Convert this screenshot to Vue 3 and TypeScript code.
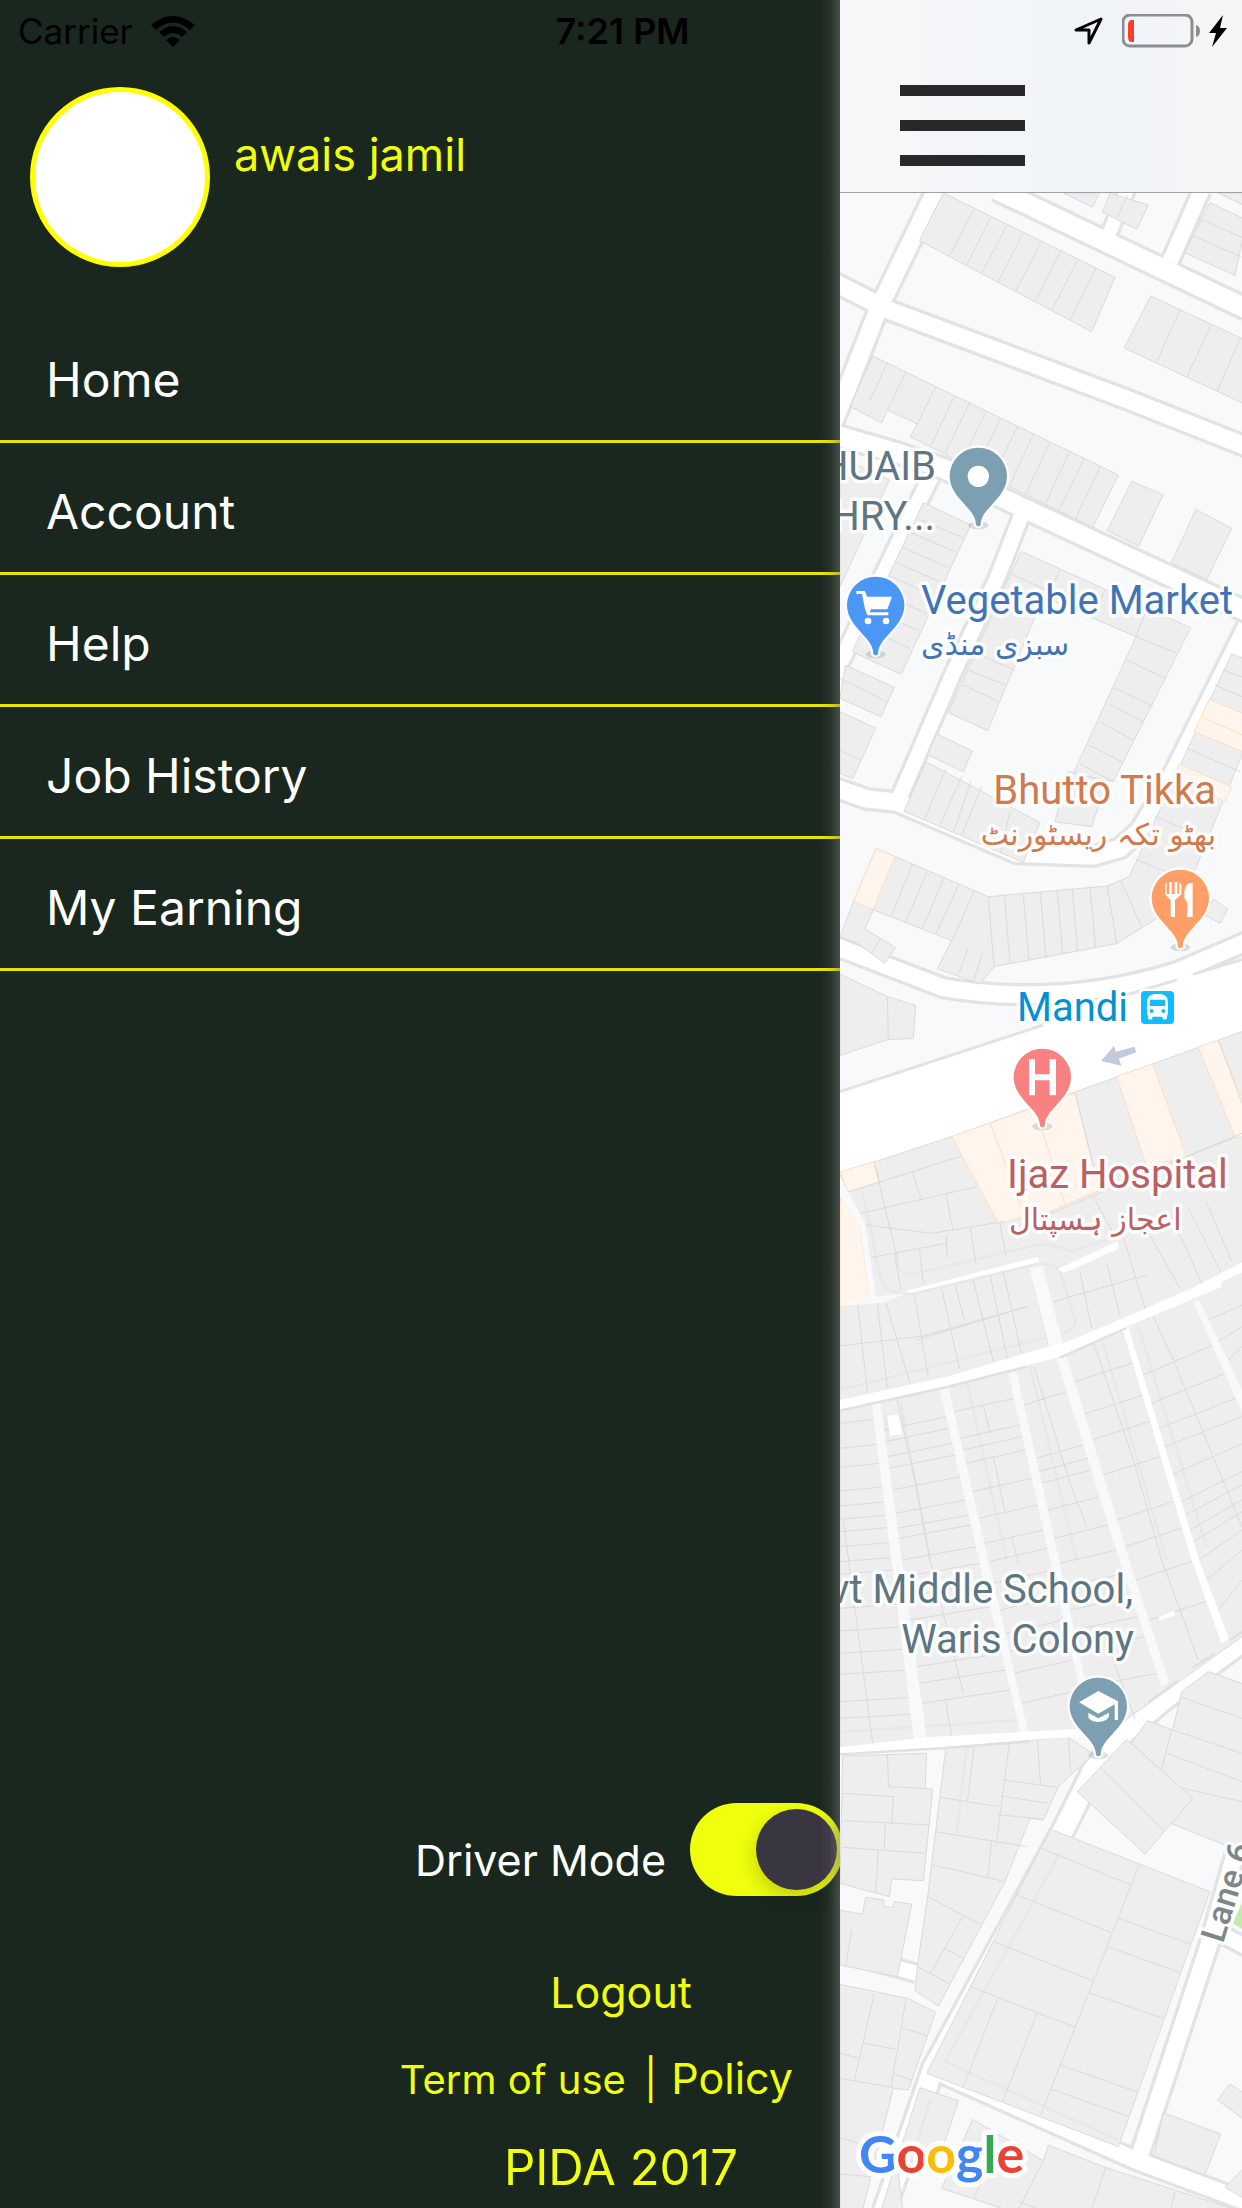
<script setup lang="ts">
import { ref } from 'vue'

type Point = [number, number]

interface Strip {
  left: Point[]
  right: Point[]
  rows: number[]
  rise: number
}

interface Road {
  d: string
  width: number
}

const driverMode = ref(true)

const menu = ['Home', 'Account', 'Help', 'Job History', 'My Earning']

const roads: Road[] = [
  { d: 'M318 570 163 890 140 940 50 1170 0 1290', width: 52 },
  { d: 'M0 840 175 930 890 1198 1250 1340', width: 52 },
  { d: 'M500 569 1250 927', width: 58 },
  { d: 'M895 560 838 700', width: 40 },
  { d: 'M1115 570 1020 785', width: 46 },
  { d: 'M0 1300 200 1358 340 1405 560 1515 1000 1720 1250 1835', width: 56 },
  { d: 'M303 1430 20 2010', width: 46 },
  { d: 'M573 1550 505 1725 365 2030 205 2400', width: 44 },
  { d: 'M1250 1880 1015 2350 930 2490 870 2545 790 2568 560 2560 200 2406 110 2397 20 2365', width: 52 },
  { d: 'M20 2840 340 2963C560 3000 800 2990 1040 2915L1250 2825', width: 50 },
  { d: 'M1250 4915 1000 5100 880 5200 790 5310 700 5490 310 6205 160 6640', width: 60 },
  { d: 'M1250 5440 1140 5825 930 6465', width: 50 },
  { d: 'M300 6205 920 6482 1250 6605', width: 50 },
  { d: 'M1180 5805 1250 5842', width: 44 },
  { d: 'M0 5850 260 5920', width: 44 },
]

const buildings: string[] = [
  '340,579 855,832 785,995 268,722',
  '700,579 808,579 788,622',
  '840,579 955,615 920,688 818,636',
  '1140,608 1250,660 1215,826 1064,758',
  '1165,579 1250,579 1250,620',
  '962,888 1250,1022 1250,1215 883,1044',
  '128,1068 865,1425 788,1583 240,1310 262,1272 172,1230 155,1268 60,1220',
  '905,1444 1000,1484 926,1638 832,1592',
  '1098,1528 1205,1585 1130,1740 1024,1688',
  '280,1508 422,1575 213,2023 67,1955',
  '30,1370 178,1440 30,1760',
  '573,1654 1082,1883 850,2345 730,2320 918,1910 640,1790 473,2192 355,2138',
  '47,1996 193,2062 153,2150 30,2095',
  '30,2135 137,2184 68,2336 30,2320',
  '320,2202 427,2253 400,2315 292,2264',
  '288,2285 630,2468 580,2587 222,2434',
  '1205,1962 1250,1980 1250,2230 1095,2610 960,2720 985,2752 860,2831 492,2900 450,2952 322,2906 365,2822 70,2706 138,2545 475,2690 832,2658 898,2630 1140,2100',
  '715,2315 830,2345 785,2480 675,2465',
  '70,2705 130,2728 105,2787 197,2843 165,2890 85,2832 30,2810',
  '30,2922 172,2990 257,3016 250,3115 172,3119 30,3166',
  '1150,2697 1193,2728 1170,2770 1125,2745',
  '30,3520 365,3410 1250,3090 1250,4900 880,5165 750,5190 290,5215 30,5245',
  '38,5268 290,5260 285,5365 308,5368 280,5642 185,5637 178,5690 30,5650',
  '348,5240 715,5212 790,5262 685,5360 640,5460 600,5455 525,5645 325,6018 255,5972 262,5900 293,5690',
  '1135,5015 1250,5055 1250,5560 1190,5537 1022,5470 1088,5395 905,5230 952,5162 1028,5190 1055,5075',
  '890,5218 1088,5395 945,5562 742,5375',
  '662,5488 1140,5675 865,6440 290,6220 560,5685',
  '30,5730 97,5743 107,5692 162,5700 162,5720 190,5722 192,5705 245,5713 202,5930 30,5895',
  '30,5953 232,5995 317,6037 235,6270 190,6265 95,6640 30,6640',
  '270,6263 385,6302 330,6470 205,6520 220,6640 150,6640',
  '428,6358 640,6482 560,6640 335,6565',
  '655,6435 820,6500 1250,6640 560,6640 640,6482',
  '1000,6338 1172,6402 1125,6525 972,6468',
  '1200,6252 1250,6285 1250,6365 1163,6300',
  '1250,6495 1185,6562 1250,6600',
]

const shops: string[] = [
  '138,2545 195,2570 130,2728 70,2706',
  '1138,2098 1250,2145 1250,2260 1092,2195',
  '1048,2292 1205,2360 1185,2405 1030,2330',
  '365,3410 735,3278 810,3570 660,3635 505,3670',
  '860,3230 968,3192 1070,3470 950,3500',
  '1105,3141 1165,3120 1250,3330 1250,3410 1215,3412',
  '30,3515 132,3485 150,3546 55,3576',
  '40,3603 90,3685 118,3884 65,3916 30,3920 30,3603',
]

/* Walls between neighbouring plots */
const walls =
  'M432 627 358 768M482 652 409 797M531 675 456 818M578 702 504 846M633 726 556 875M692 754 615 905M743 779 666 930M797 807 720 960' +
  'M1050 930 980 1086M1145 972 1071 1130M1232 1015 1162 1172M893 585 860 655M1113 657 1236 712M1090 708 1232 770' +
  'M172 1088 120 1200M228 1116 172 1230M318 1158 262 1272M375 1185 302 1337M420 1205 345 1360M468 1235 395 1385M512 1256 440 1405M562 1280 490 1430M610 1302 540 1455M660 1328 588 1480M718 1355 647 1510M762 1376 686 1532M810 1402 735 1560' +
  'M262 1555 400 1614M238 1596 378 1656M218 1642 355 1702M197 1687 335 1748M178 1727 315 1790M150 1780 290 1840M125 1830 265 1892M100 1880 240 1945' +
  'M545 1722 660 1775M690 1708 665 1765M825 1770 800 1830M945 1840 918 1910 1040 1960M890 1980 1008 2036M855 2065 968 2118M838 2112 940 2165M815 2168 912 2222M778 2236 880 2288M750 2292 850 2345M415 2010 530 2056M398 2054 508 2106M440 1960 555 2010' +
  'M30 2035 175 2108M30 2253 93 2280M347 2308 285 2455M395 2330 330 2475M422 2345 372 2495M455 2360 395 2505M540 2435 512 2560' +
  'M247 2593 183 2750M292 2615 227 2766M342 2635 277 2785M385 2655 318 2802M432 2674 367 2822M475 2690 492 2900M523 2687 540 2890M580 2685 597 2880M631 2678 648 2872M682 2672 698 2862M727 2668 743 2852M780 2665 797 2842M832 2658 860 2831M872 2642 935 2780M917 2578 1095 2650M975 2450 1120 2510M415 2842 385 2924M458 2860 430 2945M152 2815 125 2858M172 2990 175 3118' +
  'M1180 2010 1236 2030M1155 2055 1236 2090M1072 2245 1230 2315' +
  'M735 3278 790 3500M1215 3412 1070 3470M1165 3120 1236 3310M132 3485 205 3790M92 3640 440 3560M55 3576 395 3468M108 3675 305 3700 520 3665M125 3772 350 3730M247 3515 274 3598M347 3580 369 3690M421 3685 438 3790M510 3670 528 3770M349 3705 351 3775M268 3745 280 3850M193 3760 213 3870' +
  'M640 3650 1236 3400M880 3710 955 3960M790 3590 850 3700M1020 3640 1120 3860M1075 3625 1180 3830M1130 3610 1205 3785M950 3690 1050 3865M670 3905 950 3825M750 3815 785 3985M830 3790 870 3945' +
  'M30 4038 280 4008 590 3920M82 3910 113 4180M142 3908 172 4165M168 3908 240 4150M253 3885 295 4130M335 3865 388 4105M375 3855 403 3960M430 3840 490 4085M480 3825 532 4075M520 3815 575 4065M600 3805 655 4035M260 4020 590 3920' +
  'M200 4195 258 4455 300 4680 400 5080M460 4215 480 4300M490 4370 525 4535M545 4610 565 4690M612 4100 720 4450 770 4580M790 4025 915 4395 995 4680 1105 4980M970 3950 1030 4080 1240 4590M40 4560 128 5230M345 5095 365 5205M820 4900 915 5155' +
  'M172 5262 176 5360 285 5365M38 5380 190 5390 185 5470M38 5462 300 5475M165 5470 163 5548M145 5550 137 5678M38 5542 285 5560M433 5235 412 5405M332 5392 505 5420M538 5230 498 5540M520 5340 680 5362M513 5388 655 5410M503 5444 640 5458M622 5220 632 5355M715 5212 722 5312M318 5495 590 5540M308 5595 525 5645M485 5520 473 5632M293 5690 455 5775M398 5750 302 5920M342 5845 400 5875M262 5900 360 5952' +
  'M1055 5092 1236 5155M1025 5190 995 5305M1028 5190 1236 5260M1010 5260 1236 5345M1060 5365 1236 5405M812 5302 1002 5492' +
  'M635 5545 902 5655M927 5595 632 6345M560 5685 845 5798M492 5825 788 5942M422 5960 735 6082M503 5995 400 6260M620 6042 518 6305M865 5755 1080 5832M832 5840 1052 5918M777 5978 1000 6055M692 6195 925 6277M662 6267 897 6350' +
  'M65 5790 47 5898M133 5980 73 6242M228 5997 183 6262M100 6130 197 6147M215 6083 292 6108M190 6222 245 6240M30 6160 85 6174M30 6235 190 6263M30 6415 130 6440M30 6522 118 6530M525 6420 430 6595M828 6500 785 6630M1035 6575 1022 6630M565 6605 620 6625'

/* Paths that run between the rows of plots */
const alleys: string[] = [
  '30,3530 105,3670 138,3890 230,3880 160,3908 30,3918 118,3884 90,3685 30,3590',
  '125,4210 150,4205 290,5215 252,5220',
  '330,4168 355,4163 475,4680 595,5200 572,5200 447,4680',
  '535,4120 560,4115 687,4680 768,5050 745,5050 660,4680',
  '680,4078 710,4068 898,4680 1017,5045 995,5062 868,4680',
  '1090,3905 1106,3898 1250,4200 1250,4270',
  '598,3805 638,3798 700,4035 658,4045',
]

const lanes: string[] = [
  '30,4200 350,4130 660,4038 700,4030 880,3955 1085,3865 1250,3780 1250,3812 1175,3845 1172,3862 890,3980 690,4070 590,4096 340,4160 30,4228',
  '877,3985 895,3980 1107,4680 1197,4915 1175,4932 1085,4680',
  '230,3872 625,3770 628,3786 240,3880',
  '685,3806 862,3724 866,3746 700,3820',
  '172,4248 205,4244 217,4303 180,4308',
  '30,5242 290,5212 750,5186 790,5208 600,5220 350,5240 30,5260',
  '985,4850 1032,4832 1035,4846 990,4862',
]

const strips: Strip[] = [
  { left: [[30, 4200], [30, 5260]], right: [[125, 4210], [250, 5220]], rise: -12,
    rows: [4270, 4345, 4402, 4473, 4518, 4558, 4595, 4640, 4685, 4722, 4825, 4893, 4960, 5023, 5105, 5155] },
  { left: [[150, 4205], [288, 5215]], right: [[330, 4168], [447, 4680], [572, 5200]], rise: -40,
    rows: [4290, 4325, 4370, 4405, 4470, 4540, 4585, 4615, 4680, 4730, 4790, 4860, 4930, 5000, 5050, 5110] },
  { left: [[355, 4163], [475, 4680], [595, 5200]], right: [[535, 4120], [660, 4680], [745, 5050]], rise: -40,
    rows: [4235, 4315, 4350, 4390, 4475, 4555, 4630, 4685, 4750, 4830, 4900, 4955, 5020, 5110] },
  { left: [[560, 4115], [687, 4680], [768, 5050]], right: [[680, 4078], [868, 4680], [995, 5062]], rise: -40,
    rows: [4215, 4375, 4415, 4450, 4530, 4615, 4690, 4760, 4830, 4890, 4950, 5060] },
  { left: [[710, 4068], [898, 4680], [1017, 5045]], right: [[877, 3985], [1085, 4680], [1175, 4932]], rise: -56,
    rows: [4145, 4242, 4320, 4425, 4560, 4640, 4740, 4860] },
  { left: [[895, 3980], [1107, 4680], [1197, 4915]], right: [[1090, 3905], [1236, 4240], [1236, 4900]], rise: -90,
    rows: [4125, 4210, 4285, 4340, 4422, 4505, 4545, 4590, 4625, 4680, 4740, 4830] },
  { left: [[1106, 3898], [1236, 4190]], right: [[1236, 3800], [1236, 4300]], rise: -45,
    rows: [3960, 4025, 4085] },
]

function edgeX(edge: Point[], y: number): number {
  for (let i = 1; i < edge.length; i++) {
    const [x0, y0] = edge[i - 1]
    const [x1, y1] = edge[i]
    if (y <= y1 || i === edge.length - 1) {
      return Math.round(x0 + ((x1 - x0) * (y - y0)) / (y1 - y0))
    }
  }
  return edge[0][0]
}

const plotLines = strips
  .flatMap((s) => s.rows.map((y) => `M${edgeX(s.left, y)} ${y}L${edgeX(s.right, y + s.rise)} ${y + s.rise}`))
  .join('')

const pinShape =
  'M0-86A86 86 0 0 1 86 0C86 36 62 62 38 88C16 112 8 124 7 146Q0 154-7 146C-8 124-16 112-38 88C-62 62-86 36-86 0A86 86 0 0 1 0-86Z'

const pins = [
  { id: 'place', x: 445, y: 1429, color: '#7c9fb2' },
  { id: 'market', x: 137, y: 1816, color: '#4a97f5' },
  { id: 'food', x: 1051, y: 2695, color: '#ff9e67' },
  { id: 'hospital', x: 637, y: 3232, color: '#f88181' },
  { id: 'school', x: 805, y: 5119, color: '#7c9fb2' },
]
</script>

<template>
  <div class="app">
    <aside class="drawer">
      <div class="profile">
        <div class="avatar"></div>
        <span class="name">awais jamil</span>
      </div>
      <nav class="menu">
        <a v-for="item in menu" :key="item" href="#" class="menu-item">{{ item }}</a>
      </nav>
      <div class="bottom">
        <label class="driver">
          <span>Driver Mode</span>
          <input v-model="driverMode" type="checkbox" role="switch" class="switch" />
        </label>
        <button type="button" class="logout">Logout</button>
        <div class="legal">
          <a href="#" class="terms">Term of use</a>
          <span class="bar">|</span>
          <a href="#">Policy</a>
        </div>
        <p class="copyright">PIDA 2017</p>
      </div>
    </aside>

    <main class="content">
      <header class="topbar">
        <button type="button" class="burger" aria-label="Menu">
          <span></span><span></span><span></span>
        </button>
      </header>
      <div class="map">
        <svg class="map-canvas" viewBox="840 193 402 2015" preserveAspectRatio="xMinYMin slice">
          <svg x="840" y="193" width="402" height="2015" viewBox="30 579 1206 6045">
            <rect x="30" y="579" width="1206" height="6045" fill="#f8f9fb" />
            <polygon points="1250,5680 1208,5770 1250,5795" fill="#bfecae" />
            <g fill="none" stroke="#e3e3e3" stroke-linejoin="round">
              <path v-for="road in roads" :key="road.d" :d="road.d" :stroke-width="road.width + 20" />
            </g>
            <g fill="none" stroke="#fff" stroke-linejoin="round">
              <path v-for="road in roads" :key="road.d" :d="road.d" :stroke-width="road.width" />
            </g>
            <polygon points="30,3275 640,3075 820,3010 1250,2870 1250,3150 30,3540" fill="#fff" />
            <path d="M30 3275 640 3075M780 3018 1040 2940M1090 2923 1236 2878" fill="none" stroke="#e3e3e3" stroke-width="9" />
            <g fill="#eee" stroke="#dadada" stroke-width="3">
              <polygon v-for="b in buildings" :key="b" :points="b" />
            </g>
            <path
              d="M95 3580C140 3700 130 3850 180 3870Q220 3890 270 3875L590 3800Q660 3780 690 3810L735 3960Q740 3985 700 4000L30 4170M200 3790Q210 3825 250 3822L620 3735Q660 3725 720 3755L830 3720M165 4240 175 4320M210 4200 300 4680M410 4140 530 4680M600 4100 740 4680M820 4030 1010 4680M925 3980 1130 4640M40 5195 580 5160M410 5240 380 5500M690 5560 345 6185 865 6420M300 6300 240 6500"
              fill="none" stroke="#e8e8e8" stroke-width="8"
            />
            <g fill="#fff5ed" stroke="#fddfc0" stroke-width="3">
              <polygon v-for="s in shops" :key="s" :points="s" />
              <path d="M480 3368 575 3620M635 3385 705 3615M1115 2150 1236 2205" />
            </g>
            <path :d="walls + plotLines" fill="none" stroke="#dadada" stroke-width="3" />
            <g fill="#f8f9fb">
              <polygon v-for="a in alleys" :key="a" :points="a" />
            </g>
            <g fill="#fff">
              <polygon v-for="l in lanes" :key="l" :points="l" />
            </g>
            <path
              d="M30 4232 340 4164 590 4100M690 4073 890 3984M30 5263 350 5244 600 5224M955 5107 1043 5042M1087 5004 1155 4960M1200 4920 1236 4896"
              fill="none" stroke="#e0e0e0" stroke-width="7"
            />
            <polygon points="813,3183 852,3137 858,3155 913,3140 919,3157 866,3176 875,3197" fill="#c5c9dd" />

            <g v-for="pin in pins" :key="pin.id" :transform="`translate(${pin.x} ${pin.y})`">
              <ellipse cx="0" cy="147" rx="30" ry="12" fill="#000" opacity=".12" />
              <path :d="pinShape" fill="#fff" stroke="#fff" stroke-width="14" opacity=".85" />
              <path :d="pinShape" :fill="pin.color" />
              <circle v-if="pin.id === 'place'" r="32" fill="#fff" />
              <g v-else-if="pin.id === 'market'" fill="#fff">
                <path d="M-58-43H-33L-25-26H49L35 12H-14L-18 21H38V30H-25L-32 11-41-34H-58Z" />
                <circle cx="-23" cy="47" r="10" />
                <circle cx="31" cy="47" r="10" />
              </g>
              <path
                v-else-if="pin.id === 'food'" fill="#fff"
                d="M-46-40-41-49V-13H-33V-49H-26V-13H-17V-49H-9V-13H-3V-49L3-40V-12L-16 5V56H-29V5L-46-12ZM37-46V56H21V12L12 0V-20Q14-38 27-46Z"
              />
              <path
                v-else-if="pin.id === 'hospital'" fill="#fff"
                d="M-40-54H-22V-9H22V-54H41V54H22V9H-22V54H-40Z"
              />
              <g v-else fill="#fff">
                <path d="M0-46 59-15V41H49V-6L0 22-58-12Z" />
                <path d="M-30 19 0 36 32 19V30C24 52-22 52-30 32Z" />
              </g>
            </g>

            <rect x="926" y="2966" width="113" height="113" rx="14" fill="#fff" />
            <rect x="933" y="2973" width="99" height="99" rx="11" fill="#12bdff" />
            <path
              fill="#fff" fill-rule="evenodd"
              d="M951 3008C951 2989 960 2982 982 2982C1005 2982 1014 2989 1014 3008V3036L1010 3056Q1004 3061 998 3056V3050H967V3056Q961 3061 955 3056L951 3036ZM960 2999V3018H1005V2999ZM965 3027A6 6 0 1 0 965 3039A6 6 0 1 0 965 3027ZM1000 3027A6 6 0 1 0 1000 3039A6 6 0 1 0 1000 3027Z"
            />
          </svg>

          <g class="label slate" text-anchor="end">
            <text x="936" y="480">SHUAIB</text>
            <text x="935" y="530">CHAUDHRY...</text>
            <text x="1133" y="1603">Govt Middle School,</text>
            <text x="1134" y="1653">Waris Colony</text>
          </g>
          <g class="label blue">
            <text x="921" y="614">Vegetable Market</text>
            <text x="921" y="655" class="urdu">سبزی منڈی</text>
          </g>
          <g class="label orange" text-anchor="end">
            <text x="1216" y="804">Bhutto Tikka</text>
            <text x="1216" y="845" class="urdu">بھٹو تکہ ریسٹورنٹ</text>
          </g>
          <text x="1017" y="1021" class="label cyan">Mandi</text>
          <g class="label red">
            <text x="1007" y="1188">Ijaz Hospital</text>
            <text x="1009" y="1230" class="urdu">اعجاز ہسپتال</text>
          </g>
          <text class="label street" transform="translate(1223 1944) rotate(-73)">Lane 6</text>
          <text x="859" y="2173" class="google">
            <tspan fill="#4285f4">G</tspan><tspan fill="#ea4335">o</tspan><tspan fill="#fbbc05">o</tspan><tspan fill="#4285f4">g</tspan><tspan fill="#34a853">l</tspan><tspan fill="#ea4335">e</tspan>
          </text>
        </svg>
      </div>
    </main>

    <div class="status">
      <div class="carrier">
        <span>Carrier</span>
        <svg width="44" height="31" viewBox="0 0 44 31" aria-hidden="true">
          <path d="M0 9Q22-9 44 9L39 14Q22-1 5 14ZM8 16Q22 4 36 16L31 21Q22 13 13 21ZM15 24Q22 18 29 24L22 31Z" />
        </svg>
      </div>
      <time class="clock">7:21 PM</time>
      <div class="power">
        <svg class="locate" width="30" height="30" viewBox="0 0 30 30" aria-hidden="true">
          <path d="M27 3 2 14H15V27Z" fill="none" stroke="#000" stroke-width="3" stroke-linejoin="round" />
        </svg>
        <svg width="79" height="34" viewBox="0 0 79 34" aria-hidden="true">
          <rect x="1" y="1" width="69" height="31" rx="7" fill="none" stroke="#8e8e90" stroke-width="3" />
          <path d="M12 6V28H10Q6 28 6 23V11Q6 6 10 6Z" fill="#ff3b30" />
          <path d="M74 11Q78 12 78 17T74 23Z" fill="#8e8e90" />
        </svg>
        <svg width="18" height="32" viewBox="0 0 18 32" aria-hidden="true">
          <path d="M14 0 0 18H7L3 32 18 13H11Z" />
        </svg>
      </div>
    </div>
  </div>
</template>

<style>
body {
  margin: 0;
}
</style>

<style scoped>
.app {
  position: relative;
  display: grid;
  grid-template-columns: 840fr 402fr;
  min-height: 100vh;
  overflow: hidden;
  font-family: Inter, "Liberation Sans", sans-serif;
  color: #fff;
}

.drawer {
  position: relative;
  display: flex;
  flex-direction: column;
  min-width: 0;
  overflow: hidden;
  background: #1a271e;
}

/* Light bleeding in from the page beside the drawer */
.drawer::after {
  content: "";
  position: absolute;
  top: 0;
  right: 0;
  bottom: 0;
  width: 20px;
  background: linear-gradient(to right, rgba(128, 128, 128, 0), rgba(128, 128, 128, 0.12) 50%, rgba(128, 128, 128, 0.45));
  pointer-events: none;
}

.profile {
  display: flex;
  gap: 24px;
  padding: 87px 30px 44px;
}

.avatar {
  box-sizing: border-box;
  width: 180px;
  height: 180px;
  border: 5px solid #ff0;
  border-radius: 50%;
  background: #fff;
}

.name {
  margin-top: 40px;
  font-size: 45px;
  line-height: 56px;
  color: #efff0d;
}

.menu {
  display: flex;
  flex-direction: column;
}

.menu-item {
  box-sizing: border-box;
  height: 132px;
  padding: 41px 46px 0;
  border-bottom: 3px solid #e6e600;
  font-size: 48px;
  line-height: 56px;
  color: #fff;
  text-decoration: none;
}

.bottom {
  display: flex;
  flex-direction: column;
  margin-top: auto;
  padding-bottom: 12px;
  color: #efff0d;
}

.bottom a {
  color: inherit;
  text-decoration: none;
}

.driver {
  display: flex;
  align-items: center;
  justify-content: flex-end;
  gap: 24px;
  margin-right: -3px;
  font-size: 43px;
  line-height: 56px;
  color: #fff;
}

.driver span {
  padding-top: 20px;
}

.switch {
  appearance: none;
  display: flex;
  align-items: center;
  box-sizing: border-box;
  width: 153px;
  height: 93px;
  margin: 0;
  padding: 6px;
  border-radius: 47px;
  background: #5c6660;
}

.switch::before {
  content: "";
  width: 81px;
  height: 81px;
  border-radius: 50%;
  background: #393541;
  box-shadow: 0 8px 20px rgba(0, 0, 0, 0.2);
}

.switch:checked {
  justify-content: flex-end;
  background: #efff0d;
}

.logout {
  align-self: center;
  margin: 68px 0 0 402px;
  padding: 0;
  border: 0;
  background: none;
  font: inherit;
  font-size: 43px;
  line-height: 56px;
  color: inherit;
}

.legal {
  display: flex;
  justify-content: flex-end;
  align-items: baseline;
  gap: 14px;
  margin-top: 30px;
  padding-right: 47px;
  font-size: 43px;
  line-height: 56px;
}

.legal .terms {
  margin-right: 4px;
  font-size: 40px;
}

.bar {
  font-size: 40px;
}

.copyright {
  align-self: center;
  margin: 32px 0 0 402px;
  font-size: 49px;
  line-height: 56px;
}

.content {
  display: flex;
  flex-direction: column;
  min-width: 0;
}

.topbar {
  box-sizing: border-box;
  height: 193px;
  padding: 85px 60px 0;
  border-bottom: 1px solid #a2a2a2;
  background: linear-gradient(to right, #f6f7f8, #f0f4f9 65%, #f5f6f7);
}

.burger {
  display: flex;
  flex-direction: column;
  gap: 24px;
  width: 125px;
  padding: 0;
  border: 0;
  background: none;
}

.burger span {
  height: 11px;
  background: #282828;
}

.map {
  position: relative;
  flex: 1;
  overflow: hidden;
  background: #f8f9fb;
}

.map-canvas {
  position: absolute;
  width: 100%;
  height: 100%;
}

.label {
  font-family: Roboto, "Liberation Sans", sans-serif;
  font-size: 40px;
  paint-order: stroke;
  stroke: rgba(255, 255, 255, 0.85);
  stroke-width: 7px;
  stroke-linejoin: round;
}

.urdu {
  font-family: "DejaVu Sans", sans-serif;
  font-size: 30px;
}

.slate {
  fill: #5d7681;
}

.blue {
  fill: #4274b5;
}

.orange {
  fill: #d17a4d;
}

.cyan {
  fill: #0590d0;
}

.red {
  fill: #b96163;
}

.street {
  font-size: 34px;
  font-weight: 500;
  fill: #7e8688;
}

.google {
  font-family: Lato, sans-serif;
  font-size: 52px;
  font-weight: 700;
  paint-order: stroke;
  stroke: rgba(255, 255, 255, 0.85);
  stroke-width: 10px;
  stroke-linejoin: round;
}

.status {
  position: absolute;
  top: 0;
  left: 0;
  right: 0;
  display: grid;
  grid-template-columns: 1fr auto 1fr;
  align-items: center;
  height: 62px;
  padding: 0 15px 0 18px;
  font-size: 35px;
  color: #000;
  pointer-events: none;
}

.carrier,
.power {
  display: flex;
  align-items: center;
}

.carrier {
  gap: 18px;
}

.power {
  justify-content: flex-end;
  gap: 8px;
}

.locate {
  margin-right: 10px;
}

.clock {
  font-size: 36px;
  font-weight: 600;
}
</style>
